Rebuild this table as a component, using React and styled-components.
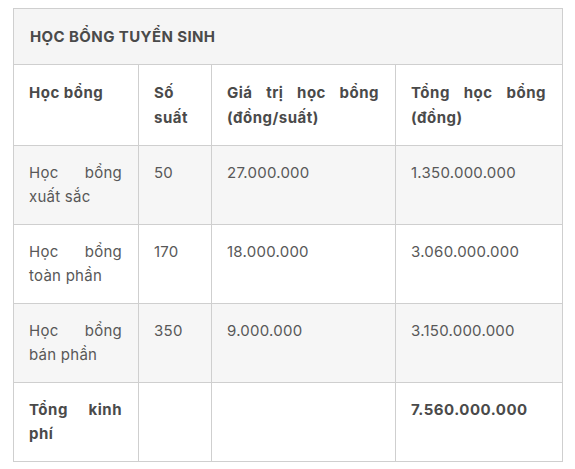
import React from "react";
import styled, { createGlobalStyle } from "styled-components";

const Global = createGlobalStyle`
  html, body { margin: 0; padding: 0; background: #fff; }
  body { font-family: Inter, "Open Sans", "Liberation Sans", sans-serif; }
`;

const Page = styled.div`
  padding: 8px 13px;
`;

const Table = styled.table`
  width: 549px;
  border-collapse: collapse;
  table-layout: fixed;
  font-size: 15px;
  color: #555;
`;

const TitleCell = styled.th`
  height: 55px;
  padding: 0 16px;
  text-align: left;
  vertical-align: middle;
  background: #f5f5f5;
  border: 1px solid #cfcfcf;
  font-weight: 700;
  font-size: 15px;
  color: #4a4a4a;
  letter-spacing: 0.4px;
`;

const Row = styled.tr`
  background: ${(p) => (p.$shade ? "#f6f6f6" : "#fff")};
`;

const Cell = styled.td`
  padding: 15px 16px 15px 15px;
  vertical-align: top;
  text-align: justify;
  line-height: 24px;
  border: 1px solid #cfcfcf;
  font-weight: ${(p) => (p.$bold ? 700 : 400)};
  color: ${(p) => (p.$bold ? "#4a4a4a" : "#585858")};
  letter-spacing: ${(p) => (p.$bold ? "0.5px" : "0.25px")};
`;

const HeadCell = styled(Cell).attrs({ as: "th" })`
  font-weight: 700;
  color: #4a4a4a;
  text-align: justify;
  line-height: 25px;
  letter-spacing: 0.5px;
`;

const rows = [
  ["Học bổng xuất sắc", "50", "27.000.000", "1.350.000.000"],
  ["Học bổng toàn phần", "170", "18.000.000", "3.060.000.000"],
  ["Học bổng bán phần", "350", "9.000.000", "3.150.000.000"],
];

export default function App() {
  return (
    <>
      <Global />
      <Page>
        <Table>
          <colgroup>
            <col style={{ width: 125 }} />
            <col style={{ width: 73 }} />
            <col style={{ width: 184 }} />
            <col style={{ width: 167 }} />
          </colgroup>
          <thead>
            <tr>
              <TitleCell colSpan={4}>HỌC BỔNG TUYỂN SINH</TitleCell>
            </tr>
          </thead>
          <tbody>
            <Row>
              <HeadCell>Học bổng</HeadCell>
              <HeadCell>Số suất</HeadCell>
              <HeadCell>Giá trị học bổng (đồng/suất)</HeadCell>
              <HeadCell>Tổng học bổng (đồng)</HeadCell>
            </Row>
            {rows.map((r, i) => (
              <Row key={i} $shade={i % 2 === 0}>
                {r.map((c, j) => (
                  <Cell key={j}>{c}</Cell>
                ))}
              </Row>
            ))}
            <Row>
              <Cell $bold>Tổng kinh phí</Cell>
              <Cell />
              <Cell />
              <Cell $bold>7.560.000.000</Cell>
            </Row>
          </tbody>
        </Table>
      </Page>
    </>
  );
}
